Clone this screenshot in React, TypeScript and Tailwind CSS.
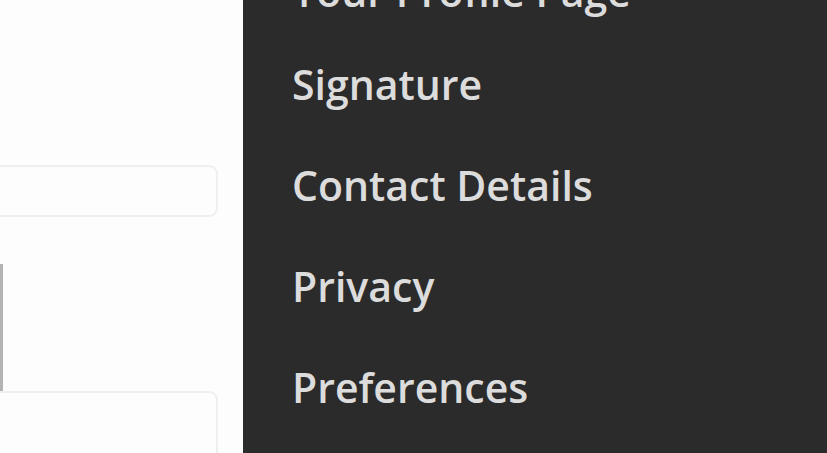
const items = ["Your Profile Page", "Signature", "Contact Details", "Privacy", "Preferences"];

export default function App() {
  return (
    <div className="flex w-[827px] h-[453px] overflow-hidden">
      <aside className="w-[243px] shrink-0 bg-[#fdfdfd] flex flex-col pt-[165px] overflow-hidden">
        <div className="ml-[-20px] w-[238px] h-[52px] shrink-0 border-2 border-[#efefef] rounded-[9px] bg-[#fdfdfd]" />
        <div className="mt-[47px] w-[3px] h-[127px] shrink-0 bg-[#b3b3b3]" />
        <div className="ml-[-20px] w-[238px] h-[90px] shrink-0 border-2 border-[#efefef] rounded-[9px] bg-[#fdfdfd]" />
      </aside>
      <nav className="flex-1 bg-[#2b2b2b] overflow-hidden">
        <ul className="mt-[-59px] pl-[49px]">
          {items.map((label, i) => (
            <li
              key={label}
              className={
                i === 0
                  ? "h-[93px] leading-[101px] text-[41px] font-semibold text-[#dcdcdc] whitespace-nowrap font-['Open_Sans',sans-serif]"
                  : "h-[101px] leading-[101px] text-[41px] font-semibold text-[#dcdcdc] whitespace-nowrap font-['Open_Sans',sans-serif]"
              }
            >
              {label}
            </li>
          ))}
        </ul>
      </nav>
    </div>
  );
}
